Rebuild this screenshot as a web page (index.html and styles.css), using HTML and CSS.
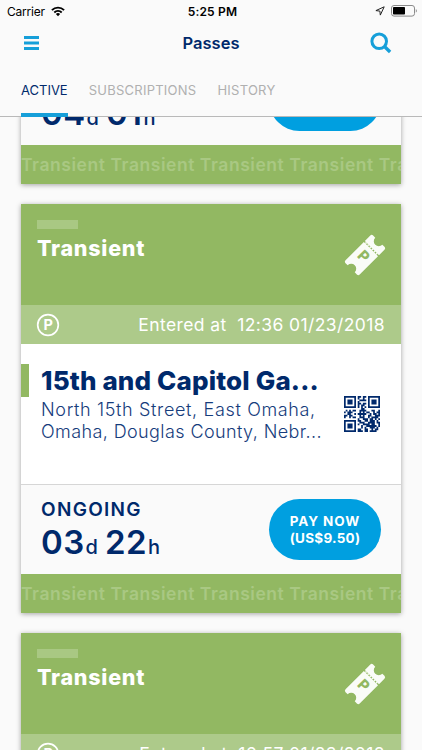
FILE: index.html
```html
<!DOCTYPE html>
<html lang="en">
<head>
    <meta charset="UTF-8">
    <meta name="viewport" content="width=device-width, initial-scale=1.0">
    <title>Passes</title>
    <link rel="stylesheet" href="styles.css">
</head>
<body>
<!-- shared icons -->
<svg class="sprite" width="0" height="0">
    <symbol id="ticket" viewBox="0 0 42 42">
        <g transform="rotate(45 21 21)">
            <path fill="#fafcf7" d="M13 1.500H16a5 5 0 0 0 10 0h3a2 2 0 0 1 2 2v7.700H11V3.500a2 2 0 0 1 2-2zM11 12.600h20V38.500a2 2 0 0 1-2 2H26a5 5 0 0 0-10 0h-3a2 2 0 0 1-2-2z"/>
            <path stroke="#fafcf7" stroke-width="1.600" stroke-dasharray="1.600 1.400" d="M12.500 11.900h17.500"/>
            <text class="ticket-p" x="21" y="28" text-anchor="middle">P</text>
        </g>
    </symbol>
    <symbol id="parking" viewBox="0 0 24 24">
        <circle cx="12" cy="12" r="10.300" fill="none" stroke="#fff" stroke-width="1.700"/>
        <text class="parking-p" x="12.300" y="17.200" text-anchor="middle">P</text>
    </symbol>
    <symbol id="qr" viewBox="0 0 21 21">
        <path fill="none" stroke="#00296b" stroke-width="1.040" d="M0 .5h7m1 0h2m1 0h2m1 0h7M0 1.500h1m5 0h1m1 0h1m2 0h1m2 0h1m5 0h1M0 2.500h1m1 0h3m1 0h1m2 0h4m1 0h1m1 0h3m1 0h1M0 3.500h1m1 0h3m1 0h1m1 0h1m5 0h1m1 0h3m1 0h1M0 4.500h1m1 0h3m1 0h1m1 0h2m1 0h2m1 0h1m1 0h3m1 0h1M0 5.500h1m5 0h1m1 0h1m1 0h2m2 0h1m5 0h1M0 6.500h7m1 0h1m1 0h1m1 0h1m1 0h7M10 7.500h2M1 8.500h1m1 0h1m1 0h2m2 0h4m3 0h2m2 0h1M0 9.500h1m1 0h3m4 0h1m1 0h1m1 0h2m2 0h1m1 0h2M2 10.500h2m2 0h1m1 0h5m2 0h1m1 0h2m1 0h1M0 11.500h2m1 0h2m4 0h1m1 0h1m2 0h2m2 0h3M0 12.500h1m2 0h1m1 0h2m2 0h3m2 0h1m1 0h4M8 13.500h1m2 0h3m1 0h2m1 0h1m1 0h1M0 14.500h7m1 0h2m2 0h2m1 0h3m1 0h1M0 15.500h1m5 0h1m2 0h3m2 0h4m1 0h2M0 16.500h1m1 0h3m1 0h1m1 0h1m2 0h4m1 0h2m2 0h1M0 17.500h1m1 0h3m1 0h1m3 0h1m2 0h6m1 0h1M0 18.500h1m1 0h3m1 0h1m3 0h1m1 0h1m2 0h3m1 0h1M0 19.500h1m5 0h1m1 0h2m2 0h2m2 0h1m1 0h2M0 20.500h7m1 0h3m1 0h2m1 0h4"/>
    </symbol>
</svg>

<header class="header">
    <div class="status-bar">
        <div class="status-left">
            <span class="carrier">Carrier</span>
            <svg width="14" height="11" viewBox="0 0 14 11" fill="none" stroke="#000" stroke-width="1.900">
                <path d="M.9 4.100a8.700 8.700 0 0 1 12.200 0M3.300 6.500a5.300 5.300 0 0 1 7.400 0"/>
                <path d="M7 10.200L4.900 8.100a3 3 0 0 1 4.200 0z" fill="#000" stroke="none"/>
            </svg>
        </div>
        <span class="clock">5:25 PM</span>
        <div class="status-right">
            <svg width="10" height="10" viewBox="0 0 10 10" fill="none" stroke="#222" stroke-width="1" stroke-linejoin="round">
                <path d="M9.200.8L.9 4.600l4 .5.4 4z"/>
            </svg>
            <svg width="27" height="12" viewBox="0 0 27 12">
                <rect x=".5" y=".5" width="23" height="10.600" rx="2.500" fill="none" stroke="#8a8a8a"/>
                <rect x="2" y="2" width="12" height="7.600" rx=".8" fill="#000"/>
                <path d="M24.800 4v3.600c1.400-.5 1.400-3.100 0-3.600z" fill="#8a8a8a"/>
            </svg>
        </div>
    </div>
    <div class="nav">
        <svg width="15" height="14" viewBox="0 0 15 14" fill="#169fd9">
            <path d="M0 0h15v3H0zM0 5.500h15v3H0zM0 11h15v3H0z"/>
        </svg>
        <h1>Passes</h1>
        <svg class="search" width="22" height="22" viewBox="0 0 22 22" fill="none" stroke="#169fd9">
            <circle cx="9.200" cy="9.300" r="7.300" stroke-width="3"/>
            <path d="M14.500 14.600l5.600 5.300" stroke-width="3.400"/>
        </svg>
    </div>
    <div class="tabs">
        <a class="tab active">ACTIVE</a>
        <a class="tab">SUBSCRIPTIONS</a>
        <a class="tab">HISTORY</a>
    </div>
</header>

<main class="pass-list">
    <div class="pass">
        <div class="pass-head">
            <div>
                <div class="bar"></div>
                <h2>Transient</h2>
            </div>
            <svg class="ticket"><use href="#ticket"/></svg>
        </div>
        <div class="entered">
            <svg class="parking"><use href="#parking"/></svg>
            <span>Entered at&nbsp; 12:36 01/23/2018</span>
        </div>
        <div class="place">
            <div class="place-text">
                <h3>15th and Capitol Ga...</h3>
                <p>North 15th Street, East Omaha,</p>
                <p class="line-2">Omaha, Douglas County, Nebr...</p>
            </div>
            <svg class="qr"><use href="#qr"/></svg>
        </div>
        <div class="payment">
            <div>
                <div class="state">ONGOING</div>
                <div class="time"><b>04</b><small>d</small><b>01</b><small>h</small></div>
            </div>
            <button class="pay-btn"><span>PAY NOW</span><span class="price">(US$9.50)</span></button>
        </div>
        <div class="strip">Transient Transient Transient Transient Transient</div>
    </div>

    <div class="pass">
        <div class="pass-head">
            <div>
                <div class="bar"></div>
                <h2>Transient</h2>
            </div>
            <svg class="ticket"><use href="#ticket"/></svg>
        </div>
        <div class="entered">
            <svg class="parking"><use href="#parking"/></svg>
            <span>Entered at&nbsp; 12:36 01/23/2018</span>
        </div>
        <div class="place">
            <div class="place-text">
                <h3>15th and Capitol Ga...</h3>
                <p>North 15th Street, East Omaha,</p>
                <p class="line-2">Omaha, Douglas County, Nebr...</p>
            </div>
            <svg class="qr"><use href="#qr"/></svg>
        </div>
        <div class="payment">
            <div>
                <div class="state">ONGOING</div>
                <div class="time"><b>03</b><small>d</small><b>22</b><small>h</small></div>
            </div>
            <button class="pay-btn"><span>PAY NOW</span><span class="price">(US$9.50)</span></button>
        </div>
        <div class="strip">Transient Transient Transient Transient Transient</div>
    </div>

    <div class="pass">
        <div class="pass-head">
            <div>
                <div class="bar"></div>
                <h2>Transient</h2>
            </div>
            <svg class="ticket"><use href="#ticket"/></svg>
        </div>
        <div class="entered">
            <svg class="parking"><use href="#parking"/></svg>
            <span>Entered at&nbsp; 16:57 01/23/2018</span>
        </div>
    </div>
</main>
</body>
</html>
```
FILE: styles.css
```css
* {
    box-sizing: border-box;
}
body {
    margin: 0;
    height: 750px;
    overflow: hidden;
    display: flex;
    flex-direction: column;
    background-color: #fafafa;
    color: #00296b;
    font-family: Inter, "Open Sans", sans-serif;
}
h1, h2, h3, p {
    margin: 0;
}
svg {
    display: block;
    flex-shrink: 0;
}
.sprite {
    position: absolute;
}
.header {
    flex: none;
    height: 117px;
    background-color: #fafafa;
    border-bottom: 1px solid #b9b9b9;
}
.status-bar {
    display: grid;
    grid-template-columns: 1fr auto 1fr;
    align-items: center;
    height: 22px;
    padding: 0 4px 0 7px;
    color: #000;
}
.status-left, .status-right {
    display: flex;
    align-items: center;
    gap: 6px;
}
.status-right {
    justify-content: flex-end;
}
.carrier {
    font-size: 12px;
    letter-spacing: -0.2px;
}
.clock {
    font-size: 12px;
    font-weight: 600;
    letter-spacing: 0.2px;
}
.nav {
    display: grid;
    grid-template-columns: 1fr auto 1fr;
    align-items: center;
    height: 42px;
    padding: 0 24px;
}
.nav h1 {
    font-size: 16.500px;
    font-weight: 600;
}
.search {
    justify-self: end;
    margin-right: 6px;
}
.tabs {
    display: flex;
    gap: 21px;
    height: 53px;
    padding-left: 21px;
}
.tab {
    padding-top: 17px;
    font-size: 13px;
    line-height: 18px;
    letter-spacing: 0.25px;
    color: #b0b0b0;
    border-bottom: 4px solid transparent;
}
.tab.active {
    letter-spacing: 0;
    color: #00296b;
    border-color: #169fd9;
}
.pass-list {
    flex: 1;
    min-height: 0;
    overflow: hidden;
    padding: 0 21px;
}
.pass {
    margin-bottom: 20px;
    background-color: #fff;
    box-shadow: 0 1px 5px rgba(0, 0, 0, 0.35);
}
/* list is scrolled down to the second pass */
.pass:first-child {
    margin-top: -342px;
}
.pass-head {
    display: flex;
    justify-content: space-between;
    height: 101px;
    padding: 16px 15px 16px 16px;
    background-color: #92b862;
    color: #fff;
}
.bar {
    width: 41px;
    height: 9px;
    background-color: #a9c883;
}
.pass-head h2 {
    margin-top: 6px;
    font-size: 21.500px;
    line-height: 26px;
    font-weight: 800;
    letter-spacing: 0.75px;
}
.ticket {
    width: 42px;
    height: 42px;
    margin-top: 14px;
}
.ticket-p {
    font-size: 15px;
    font-weight: 800;
    fill: #92b862;
}
.entered {
    display: flex;
    align-items: center;
    justify-content: space-between;
    height: 39px;
    padding: 0 16px 0 15px;
    background-color: #adca8a;
    color: #fff;
    font-size: 17.500px;
    font-weight: 400;
    letter-spacing: 0.4px;
}
.parking {
    width: 24px;
    height: 24px;
    letter-spacing: 0;
}
.parking-p {
    font-size: 14.500px;
    font-weight: 700;
    fill: #fff;
}
.place {
    display: flex;
    justify-content: space-between;
    height: 140px;
    padding: 20px 21px 0 0;
    white-space: nowrap;
}
.place-text {
    height: 33px;
    padding-left: 12px;
    border-left: 8px solid #92b862;
}
.place h3 {
    margin-bottom: 2px;
    font-size: 26px;
    line-height: 33px;
    font-weight: 800;
    letter-spacing: 0.15px;
}
.place p {
    font-size: 18px;
    line-height: 22px;
    font-weight: 300;
    letter-spacing: 0.65px;
    color: #163c7c;
}
.place .line-2 {
    letter-spacing: 0.4px;
}
.qr {
    width: 36px;
    height: 36px;
    margin-top: 32px;
}
.payment {
    display: flex;
    justify-content: space-between;
    height: 90px;
    padding: 14px 20px 0;
    border-top: 1px solid #d6d6d6;
    background-color: #fafafa;
}
.state {
    font-size: 19px;
    line-height: 22px;
    font-weight: 600;
    letter-spacing: 1.3px;
}
.time {
    display: flex;
    align-items: baseline;
    line-height: 42px;
}
.time b {
    font-size: 33px;
    font-weight: 600;
    letter-spacing: 0.4px;
}
.time small {
    margin-right: 7px;
    margin-left: 1px;
    font-size: 20px;
    font-weight: 500;
}
.pay-btn {
    display: flex;
    flex-direction: column;
    align-items: center;
    justify-content: center;
    width: 112px;
    height: 61px;
    padding: 0;
    border: none;
    border-radius: 31px;
    background-color: #009fe0;
    color: #fff;
    font-family: inherit;
    font-size: 13.500px;
    line-height: 17px;
    font-weight: 700;
    letter-spacing: 0.9px;
    cursor: pointer;
}
.price {
    letter-spacing: 0.25px;
}
.strip {
    height: 39px;
    overflow: hidden;
    background-color: #92b862;
    color: #a9c883;
    font-size: 17.500px;
    line-height: 39px;
    font-weight: 600;
    letter-spacing: 0.55px;
    white-space: nowrap;
}
```
